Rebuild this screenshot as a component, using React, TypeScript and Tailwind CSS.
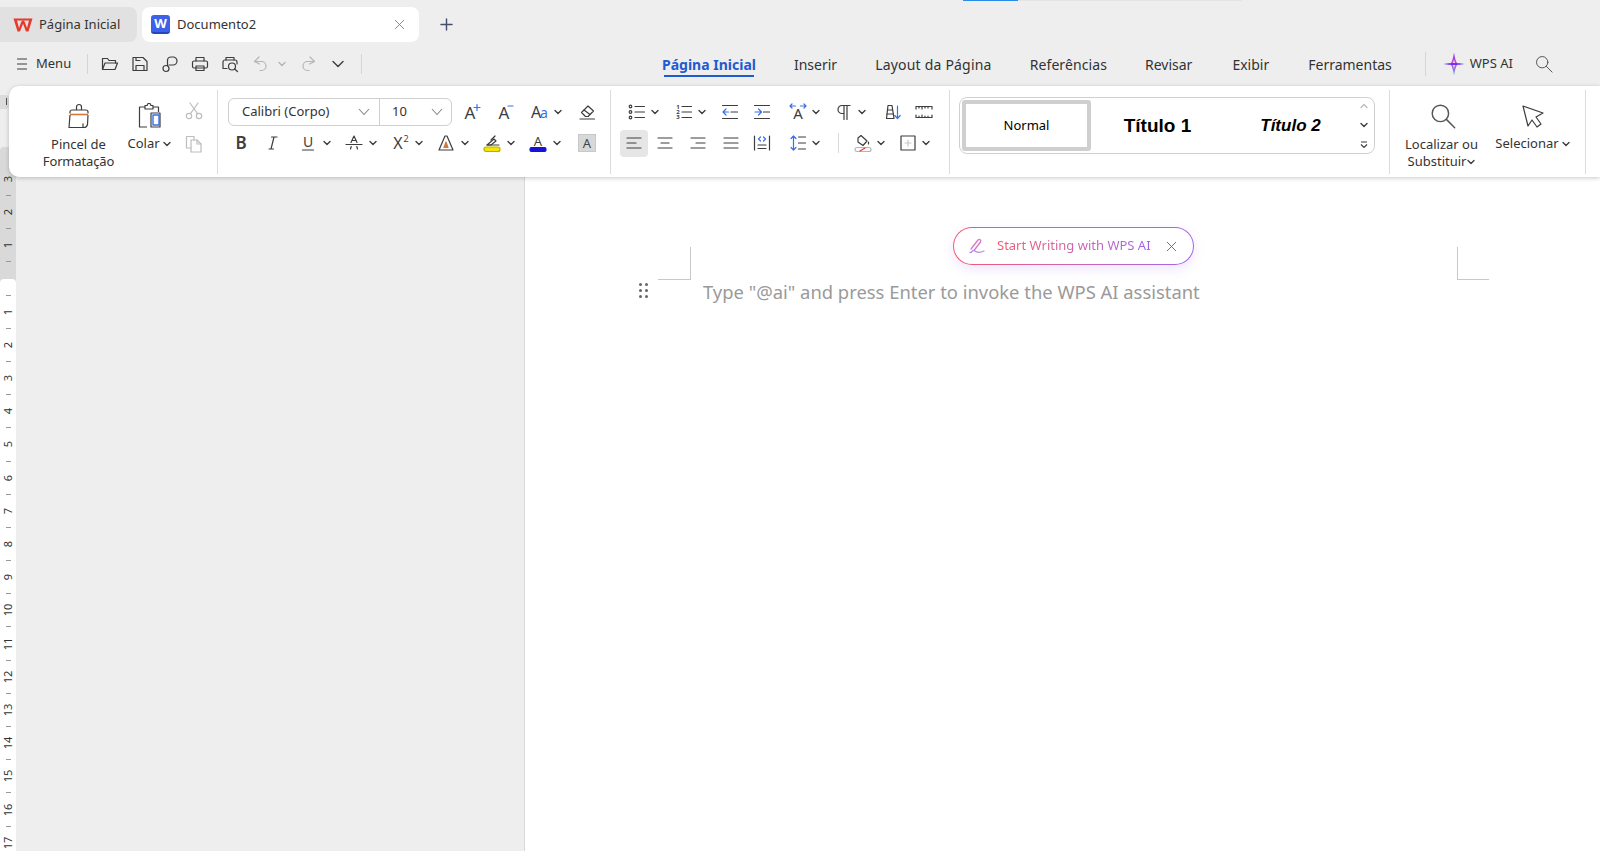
import React from 'react';
import { X, Plus } from 'lucide-react';

const INK = '#3d3d3d';
const BLUE = '#3b6fe6';
const FONT = '[font-family:"Noto_Sans",sans-serif]';

function Ic({ size = 18, children, className }: { size?: number; children: React.ReactNode; className?: string }) {
  return (
    <svg width={size} height={size} viewBox={`0 0 ${size} ${size}`} fill="none" stroke={INK} strokeWidth={1.2} strokeLinecap="round" strokeLinejoin="round" className={`shrink-0 overflow-visible ${className ?? ''}`}>
      {children}
    </svg>
  );
}

function Letter({ ch, x = 9, y = 14, size = 15, weight = 400, italic = false, fill = INK }: { ch: string; x?: number; y?: number; size?: number; weight?: number; italic?: boolean; fill?: string }) {
  return (
    <text x={x} y={y} textAnchor="middle" fontFamily="Noto Sans, sans-serif" fontSize={size} fontWeight={weight} fontStyle={italic ? 'italic' : 'normal'} fill={fill} stroke="none">
      {ch}
    </text>
  );
}

function Chev({ className, color = INK }: { className?: string; color?: string }) {
  return (
    <svg width="8" height="6" viewBox="0 0 8 6" fill="none" stroke={color} strokeWidth={1.4} strokeLinecap="round" strokeLinejoin="round" className={`shrink-0 ${className ?? ''}`}>
      <path d="M1 1.5 4 4.5 7 1.5" />
    </svg>
  );
}

// icon followed by its little dropdown arrow
function Drop({ children, className, wide }: { children: React.ReactNode; className?: string; wide?: boolean }) {
  return (
    <div className={`flex items-center shrink-0 ${className ?? ''}`}>
      {children}
      <Chev className={wide ? 'ml-[6px]' : 'ml-[5px]'} />
    </div>
  );
}

function WpsLogo() {
  return (
    <svg width="20" height="16" viewBox="0 0 20 16" className="shrink-0">
      <path d="M0.5 1.5H19.5L15.5 14.5H13L10 6.8L7 14.5H4.5Z M4 3.6 6 11 8.4 4.4H11.6L14 11 16 3.6Z" fill="#e8392d" fillRule="evenodd" />
      <path d="M8.6 3.6H11.4L10 7.6Z" fill="#e8392d" />
    </svg>
  );
}

function WordLogo() {
  return (
    <div className="w-[19px] h-[19px] rounded-[3px] bg-[#3b62e8] border-b-2 border-[#2746b8] flex items-center justify-center text-white text-[13px] font-bold leading-none shrink-0">
      W
    </div>
  );
}

function StarLogo() {
  return (
    <svg width="22" height="24" viewBox="0 0 22 24" className="shrink-0">
      <defs>
        <linearGradient id="starV" x1="0" y1="0" x2="0" y2="1">
          <stop offset="0" stopColor="#7a2ff0" />
          <stop offset="0.5" stopColor="#d64bd8" />
          <stop offset="1" stopColor="#35a9f5" />
        </linearGradient>
      </defs>
      <path d="M11 0.5C11.8 6 13 9.5 14.5 12 13 14.5 11.8 18 11 23.5 10.2 18 9 14.5 7.5 12 9 9.5 10.2 6 11 0.5Z M11 7.5C10.7 9.2 10.2 10.6 9.6 12 10.2 13.4 10.7 14.8 11 16.5 11.3 14.8 11.8 13.4 12.4 12 11.8 10.6 11.3 9.2 11 7.5Z" fill="url(#starV)" fillRule="evenodd" />
      <path d="M0.5 12C7 10.6 15 10.6 21.5 12 15 13.4 7 13.4 0.5 12Z" fill="#6a2df0" />
    </svg>
  );
}

function Search({ size = 20, color = '#555' }: { size?: number; color?: string }) {
  return (
    <svg width={size} height={size} viewBox="0 0 20 20" fill="none" stroke={color} strokeWidth={1.1} strokeLinecap="round" className="shrink-0">
      <circle cx="8" cy="8" r="6.3" />
      <path d="M12.6 12.6 19 19" />
    </svg>
  );
}

function Lines({ rows }: { rows: [number, number, number][] }) {
  return (
    <Ic>
      {rows.map(([x1, x2, y]) => (
        <path key={y} d={`M${x1} ${y}H${x2}`} />
      ))}
    </Ic>
  );
}

function TitleBar() {
  return (
    <div className="h-[42px] pt-[7px] flex items-stretch relative shrink-0">
      <div className="absolute top-0 left-[963px] w-[55px] h-px bg-[#2b8be8]" />
      <div className="absolute top-0 left-[1018px] w-[224px] h-px bg-[#e4e4e4]" />
      <div className="w-[137px] rounded-r-lg bg-[#e1e1e1] flex items-center pl-[13px] gap-[6px]">
        <WpsLogo />
        <span className="text-[13px] text-[#333]">Página Inicial</span>
      </div>
      <div className="w-[277px] ml-[5px] rounded-lg bg-white flex items-center pl-[9px] pr-[11px]">
        <WordLogo />
        <span className="text-[13px] text-[#333] ml-[7px] flex-1">Documento2</span>
        <X size={17} strokeWidth={1.2} color="#777" />
      </div>
      <Plus size={19} strokeWidth={1.8} color="#44506b" className="self-center ml-[18px]" />
    </div>
  );
}

function QuickBar() {
  const dim = '#b5b5b5';
  return (
    <div className="h-[44px] flex items-center shrink-0 relative">
      <svg width="12" height="14" viewBox="0 0 12 14" stroke={INK} strokeWidth={1.1} className="ml-[16px] shrink-0">
        <path d="M1 2H11M1 7H11M1 12H11" />
      </svg>
      <span className="ml-[8px] text-[13px] text-[#333] w-[36px]">Menu</span>
      <div className="w-px h-[20px] bg-[#d5d5d5] ml-[15px]" />
      <div className="ml-[13px] flex items-center gap-[12px]">
        <Ic><path d="M1.5 14.5V3.5H6.5L8 5.5H14.5V8" /><path d="M1.5 14.5H14L16.5 8H4L1.5 14.5Z" /></Ic>
        <Ic><path d="M2 2.5H12L16 6.5V15.5H2Z" /><path d="M5 15.5V10.5H13V15.5" /><path d="M5 2.5V5.5H9" /></Ic>
        <Ic><path d="M8 10H12A4 4 0 0 0 12 2H10A3.5 3.5 0 0 0 6.5 5.5V11" /><circle cx="5" cy="13.5" r="3" /></Ic>
        <Ic><path d="M5 6V2.5H13V6" /><rect x="1.5" y="6" width="15" height="7" rx="1.5" /><path d="M5 11V15.5H13V11Z" /></Ic>
        <Ic><path d="M5 5V2.5H13V5" /><path d="M6 13.5H2V7A2 2 0 0 1 4 5H14A2 2 0 0 1 16 7V9" /><circle cx="11" cy="11.5" r="3.5" /><path d="M13.6 14 16.5 16.5" /></Ic>
      </div>
      <div className="ml-[13px] flex items-center">
        <Ic><g stroke={dim}><path d="M7 2 2.5 6.5 7.5 9" /><path d="M2.5 6.5H9.5A4.5 4.5 0 0 1 9.5 15.5H8" /></g></Ic>
        <Chev className="ml-[8px]" color={dim} />
        <Ic className="ml-[13px]"><g stroke={dim}><path d="M11 2 15.5 6.5 10.5 9" /><path d="M15.5 6.5H8.5A4.5 4.5 0 0 0 8.5 15.5H10" /></g></Ic>
        <svg width="12" height="8" viewBox="0 0 12 8" fill="none" stroke={INK} strokeWidth={1.4} strokeLinecap="round" strokeLinejoin="round" className="ml-[15px]"><path d="M1 1.5 6 6.5 11 1.5" /></svg>
      </div>
      <div className="w-px h-[20px] bg-[#d5d5d5] ml-[17px]" />
      <nav className="ml-[300px] mt-px flex items-center text-[14px] text-[#333] gap-[38px]">
        <span className="relative font-bold text-[#1f5bd0]">
          Página Inicial
          <span className="absolute left-[2px] right-[2px] -bottom-[2px] h-[2px] bg-[#1f5bd0]" />
        </span>
        <span>Inserir</span>
        <span className="tracking-[0.2px]">Layout da Página</span>
        <span className="tracking-[0.1px]">Referências</span>
        <span>Revisar</span>
        <span className="ml-[2px]">Exibir</span>
        <span className="ml-[1px]">Ferramentas</span>
      </nav>
      <div className="w-px h-[24px] bg-[#d5d5d5] ml-[33px]" />
      <div className="ml-[17px]"><StarLogo /></div>
      <span className="ml-[5px] text-[13px] text-[#333]">WPS AI</span>
      <div className="ml-[22px]"><Search size={18} /></div>
    </div>
  );
}

function Divider() {
  return <div className="w-px h-[84px] bg-[#dcdcdc] self-center shrink-0" />;
}

function ClipboardGroup() {
  return (
    <div className="w-[208px] flex shrink-0">
      <div className="ml-[30px] w-[79px] pt-[16px] flex flex-col items-center">
        <svg width="28" height="28" viewBox="0 0 28 28" fill="none" stroke={INK} strokeWidth={1.2} strokeLinejoin="round">
          <path d="M11.5 8V5A2.5 2.5 0 0 1 16.5 5V8" />
          <path d="M5 11.5V10A2 2 0 0 1 7 8H21A2 2 0 0 1 23 10V11.5" />
          <path d="M5 12.5H23" stroke="#d2783c" strokeWidth={1.6} />
          <path d="M5 13 4 25.5H19C21 25.5 22 24.5 22.5 22.5L23 13" />
          <path d="M18 21.5V25.5" />
        </svg>
        <div className="mt-[6px] text-[13px] leading-[17px] text-[#333] text-center whitespace-nowrap">
          Pincel de<br />
          <span className="tracking-[-0.15px]">Formatação</span>
        </div>
      </div>
      <div className="ml-[11px] w-[40px] pt-[16px] flex flex-col items-center">
        <svg width="28" height="28" viewBox="0 0 28 28" fill="none" stroke={INK} strokeWidth={1.2} strokeLinejoin="round">
          <path d="M10 5H4.5V25H12" />
          <path d="M18 5H23.5V10" />
          <path d="M10 7V3.5H12L13 1.5H15L16 3.5H18V7Z" />
          <rect x="16" y="11" width="9" height="14" fill="#fff" stroke={INK} />
          <rect x="18" y="13" width="6" height="10" stroke={BLUE} strokeWidth={1.4} />
        </svg>
        <div className="mt-[5px] flex items-center text-[13px] leading-[17px] text-[#333] whitespace-nowrap">Colar<Chev className="ml-[3px]" /></div>
      </div>
      <div className="ml-[16px] w-[18px] pt-[16px] flex flex-col items-center">
        <Ic><g stroke="#bdbdbd"><circle cx="4" cy="14" r="2.7" /><circle cx="14" cy="14" r="2.7" /><path d="M5.5 11.7 13 1M12.5 11.7 5 1" /></g></Ic>
        <div className="mt-[15px]">
          <Ic><g stroke="#bdbdbd"><path d="M6 13H1.5V1.5H9V5" /><path d="M6 5H12L16 9V17H6Z" /><path d="M12 5V9H16" /></g></Ic>
        </div>
      </div>
    </div>
  );
}

function FontGroup() {
  return (
    <div className="w-[392px] pt-[12px] flex flex-col shrink-0">
      <div className="h-[28px] flex items-center">
        <div className="ml-[10px] w-[224px] h-[28px] rounded-md border-[1.5px] border-[#cfcfcf] flex items-center text-[13px] text-[#333] shrink-0">
          <span className="pl-[13px] w-[151px] flex items-center justify-between pr-[9px] h-full border-r-[1.5px] border-[#cfcfcf]">
            Calibri (Corpo)
            <svg width="12" height="8" viewBox="0 0 12 8" fill="none" stroke="#888" strokeWidth={1.1}><path d="M1 1 6 6.5 11 1" /></svg>
          </span>
          <span className="pl-[12px] pr-[8px] flex-1 flex items-center justify-between">
            10
            <svg width="12" height="8" viewBox="0 0 12 8" fill="none" stroke="#888" strokeWidth={1.1}><path d="M1 1 6 6.5 11 1" /></svg>
          </span>
        </div>
        <Ic className="ml-[11px]"><Letter ch="A" x={7} y={16} size={17} /><path d="M11 4.5H17M14 1.5V7.5" stroke={BLUE} /></Ic>
        <Ic className="ml-[15px]"><Letter ch="A" x={8} y={16} size={17} /><path d="M12 3H17" stroke={BLUE} /></Ic>
        <Drop className="ml-[16px]" wide><Ic><Letter ch="A" x={6} y={15} size={16} /><Letter ch="a" x={14} y={15} size={14} fill={BLUE} /></Ic></Drop>
        <Ic className="ml-[16px]"><path d="M3.5 9.5 10 3 15.5 8 10 13.5H7.5Z" /><path d="M6 7 12 11.5" /><path d="M2 16H16.5" /></Ic>
      </div>
      <div className="mt-[3px] h-[28px] flex items-center pl-[14px]">
        <Ic><Letter ch="B" weight={600} size={17} y={15} /></Ic>
        <Ic className="ml-[13px]"><path d="M8 15 11 3M6 15H10.5M8.5 3H14" /></Ic>
        <Drop className="ml-[18px]" wide><Ic><Letter ch="U" y={13} size={14} /><path d="M3.5 16H14.5" /></Ic></Drop>
        <Drop className="ml-[14px]" wide><Ic><path d="M6 8.5 9 2 12 8.5M7 6.5H11" /><path d="M1 10.5H17" /><path d="M5.5 15 6.2 12.5M12.5 15 11.8 12.5" /></Ic></Drop>
        <Drop className="ml-[14px]" wide><Ic><Letter ch="X" x={7} y={15} size={16} /><Letter ch="2" x={15} y={8} size={9} /></Ic></Drop>
        <Drop className="ml-[14px]" wide><Ic><path d="M2 16 8 2H10L16 16Z" /><path d="M7 13.5 9 8 11 13.5Z" fill="#d2783c" stroke="#d2783c" /></Ic></Drop>
        <Drop className="ml-[14px]" wide>
          <Ic><path d="M4 11 11 5 13 7 8 11Z" /><path d="M12 2 8 6" /><path d="M4 11H16" /><rect x="1" y="13" width="16" height="4.5" rx="2" fill="#f3e600" stroke="#b9ad00" /></Ic>
        </Drop>
        <Drop className="ml-[14px]" wide>
          <Ic><Letter ch="A" y={12} size={13} /><rect x="1" y="13.5" width="16" height="4" rx="1.5" fill="#1414d8" stroke="#1414d8" /></Ic>
        </Drop>
        <div className="ml-[17px] w-[18px] h-[18px] bg-[#d8d8d8] border border-[#c8c8c8] flex items-center justify-center text-[13px] leading-none text-[#444]">A</div>
      </div>
    </div>
  );
}

function ParagraphGroup() {
  return (
    <div className="w-[338px] pt-[12px] flex flex-col shrink-0">
      <div className="h-[28px] flex items-center pl-[17px]">
        <Drop><Ic><circle cx="2.5" cy="3.5" r="1.3" /><circle cx="2.5" cy="9" r="1.3" /><circle cx="2.5" cy="14.5" r="1.3" /><path d="M7 3.5H16.5M7 9H16.5M7 14.5H16.5" /></Ic></Drop>
        <Drop className="ml-[16px]"><Ic><Letter ch="1" x={3} y={6} size={6} weight={700} /><Letter ch="2" x={3} y={11} size={6} weight={700} /><Letter ch="3" x={3} y={16} size={6} weight={700} /><path d="M7 3.5H16.5M7 9H16.5M7 14.5H16.5" /></Ic></Drop>
        <Ic className="ml-[15px]"><path d="M1.5 2.5H16.5M10 9H16.5M1.5 15.5H16.5" /><path d="M7.5 9H2M5 6 2 9 5 12" stroke={BLUE} /></Ic>
        <Ic className="ml-[14px]"><path d="M1.5 2.5H16.5M10.5 9H16.5M1.5 15.5H16.5" /><path d="M2 9H8M5.5 6 8.5 9 5.5 12" stroke={BLUE} /></Ic>
        <Drop className="ml-[18px]"><Ic><Letter ch="A" y={16} size={15} /><path d="M1 3H6.5M11.5 3H17M3 1 1 3 3 5M15 1 17 3 15 5" stroke={BLUE} /></Ic></Drop>
        <Drop className="ml-[15px]"><Ic><path d="M9 2.5H7A4 4 0 0 0 7 10.5H9V2.5H15M9 2.5V16.5M12 2.5V16.5" /></Ic></Drop>
        <Ic className="ml-[17px]"><path d="M3.5 15.5 5 2.5H9L11 15.5Z" /><path d="M4 11H10.5M5 7H9.5" /><path d="M14.5 3V15.5M11.8 12.5 14.5 15.5 17.2 12.5" stroke={BLUE} /></Ic>
        <Ic className="ml-[14px]"><path d="M1 6V3.5H17V6M1 12V14.5H17V12" /><path d="M4 3.5V5M7 3.5V6M10 3.5V5M13 3.5V5M4 14.5V13M7 14.5V12M10 14.5V13M13 14.5V13" /></Ic>
      </div>
      <div className="mt-[3px] h-[28px] flex items-center pl-[9px]">
        <div className="w-[28px] h-[27px] rounded-[4px] bg-[#e6e6e6] flex items-center justify-center"><Lines rows={[[2, 16, 4], [2, 11, 9], [2, 16, 14]]} /></div>
        <div className="ml-[8px]"><Lines rows={[[2, 16, 4], [5, 13, 9], [2, 16, 14]]} /></div>
        <div className="ml-[15px]"><Lines rows={[[2, 16, 4], [7, 16, 9], [2, 16, 14]]} /></div>
        <div className="ml-[15px]"><Lines rows={[[2, 16, 4], [2, 16, 9], [2, 16, 14]]} /></div>
        <Ic className="ml-[13px]"><path d="M1.5 2V16M16.5 2V16M5 11H13M5 14.5H13" /><path d="M7.5 3 5.5 5 7.5 7M10.5 3 12.5 5 10.5 7" stroke={BLUE} /></Ic>
        <Drop className="ml-[18px]"><Ic><path d="M4.5 2V16M2 4.5 4.5 2 7 4.5M2 13.5 4.5 16 7 13.5" stroke={BLUE} /><path d="M9.5 3H16.5M9.5 9H16.5M9.5 15H16.5" /></Ic></Drop>
        <div className="ml-[18px] w-px h-[20px] bg-[#d8d8d8]" />
        <Drop className="ml-[15px]">
          <Ic><path d="M4 4 7 1.5 13 7 9 11.5 4 8Z" /><path d="M14.5 8V10" /><rect x="1" y="13.5" width="16" height="4" rx="2" stroke="#b5b5b5" /><path d="M6 17 11 14" stroke="#e8392d" /></Ic>
        </Drop>
        <Drop className="ml-[14px]"><Ic><rect x="2" y="2" width="14" height="14" /><path d="M9 6V12M6 9H12" stroke="#c8c8c8" /></Ic></Drop>
      </div>
    </div>
  );
}

function StylesGroup() {
  return (
    <div className="w-[439px] pl-[9px] pt-[11px] shrink-0">
      <div className="w-[416px] h-[57px] rounded-[8px] border-[1.5px] border-[#d0d0d0] flex items-center text-black pl-[2px]">
        <div className="w-[129px] h-[51px] rounded-[3px] border-[4px] border-[#cfcfcf] flex items-center justify-center text-[13px]">Normal</div>
        <div className={`w-[133px] pt-px text-center text-[19px] font-bold [font-family:"Liberation_Sans",sans-serif]`}>Título 1</div>
        <div className={`w-[133px] pt-px text-center text-[17px] font-bold italic [font-family:"Liberation_Sans",sans-serif]`}>Título 2</div>
        <div className="flex flex-col items-center ml-[3px] gap-[13px]">
          <Chev className="rotate-180" color="#bbb" />
          <Chev />
          <svg width="8" height="8" viewBox="0 0 8 8" fill="none" stroke={INK} strokeWidth={1.2}><path d="M1 1H7M1 3.5 4 6.5 7 3.5" /></svg>
        </div>
      </div>
    </div>
  );
}

function EditGroup() {
  return (
    <div className="w-[195px] flex shrink-0 text-[13px] leading-[17px] text-[#333]">
      <div className="w-[100px] pl-[3px] pt-[17px] flex flex-col items-center">
        <div className="h-[27px] ml-[2px]"><Search size={26} /></div>
        <div className="mt-[6px] text-center whitespace-nowrap">
          Localizar ou<br />
          <span className="inline-flex items-center">Substituir<Chev className="ml-[1px]" /></span>
        </div>
      </div>
      <div className="w-[85px] pt-[17px] flex flex-col items-center">
        <svg width="26" height="27" viewBox="0 0 26 27" fill="none" stroke={INK} strokeWidth={1.2} strokeLinejoin="round">
          <path d="M3 3 23 10 16 14 21 21 17 24 12 17 8 23Z" />
        </svg>
        <div className="mt-[5px] flex items-center whitespace-nowrap">Selecionar<Chev className="ml-[3px]" /></div>
      </div>
    </div>
  );
}

function Ribbon() {
  return (
    <div className="relative z-10 ml-[9px] h-[91px] bg-white rounded-l-[10px] shadow-[0_1px_4px_rgba(0,0,0,0.22)] flex shrink-0">
      <ClipboardGroup />
      <Divider />
      <FontGroup />
      <Divider />
      <ParagraphGroup />
      <Divider />
      <StylesGroup />
      <Divider />
      <EditGroup />
      <Divider />
    </div>
  );
}

function RulerUnit({ n, up }: { n: number; up?: boolean }) {
  const num = (
    <div className="h-[14px] -my-[7px] flex items-center justify-center text-[11px] leading-[14px] text-[#333] -rotate-90">{n}</div>
  );
  return (
    <div className="h-[33.2px] flex flex-col items-center justify-between">
      {up ? num : <div className="h-0" />}
      <div className="w-[5px] h-px bg-[#999]" />
      {up ? <div className="h-0" /> : num}
    </div>
  );
}

function Ruler() {
  return (
    <div className="w-[16px] shrink-0 flex flex-col">
      <div className="mt-[9px] w-[9px] h-[14px] pt-[3px] pl-[6px] rounded-r-[4px] bg-[#dcdcdc]">
        <div className="w-px h-[7px] bg-[#555]" />
      </div>
      <div className="mt-[38px] h-[131.5px] rounded-t-[4px] bg-[#d9d9d9] flex flex-col justify-end">
        {[3, 2, 1].map((n) => <RulerUnit key={n} n={n} up />)}
      </div>
      <div className="flex-1 min-h-0 bg-[#d9d9d9]">
        <div className="h-full bg-white rounded-t-[4px] overflow-hidden">
          {Array.from({ length: 17 }, (_, i) => <RulerUnit key={i} n={i + 1} />)}
        </div>
      </div>
    </div>
  );
}

function WritePill() {
  return (
    <div className="absolute left-[428px] top-[141px] w-[241px] h-[38px] rounded-full p-px bg-gradient-to-r from-[#f4566b] to-[#a463e8] shadow-[0_4px_12px_rgba(150,100,240,0.16)]">
      <div className="h-full rounded-full bg-white flex items-center pl-[14px]">
        <svg width="18" height="18" viewBox="0 0 18 18" fill="none" strokeWidth={1.3} strokeLinecap="round" strokeLinejoin="round">
          <path d="M3 12 10 3C11.5 1.5 13.5 3 12.5 5L6 13.5" stroke="#d878c8" />
          <path d="M2 15.5C4 16 4 13 6 13.5 8 15 12 16 16 14" stroke="#b98ae8" />
        </svg>
        <span className="ml-[11px] text-[13px] bg-gradient-to-r from-[#f8556a] to-[#a25fe6] bg-clip-text text-transparent whitespace-nowrap">Start Writing with WPS AI</span>
        <X size={17} strokeWidth={1.3} color="#666" className="ml-[12px]" />
      </div>
    </div>
  );
}

function Page() {
  return (
    <div className="flex-1 bg-white relative">
      <div className="absolute left-[133px] top-[161px] w-[33px] h-[33px] border-r border-b border-[#c8c8c8]" />
      <div className="absolute left-[932px] top-[161px] w-[32px] h-[33px] border-l border-b border-[#c8c8c8]" />
      <WritePill />
      <div className="absolute left-[114px] top-[197px] grid grid-cols-2 gap-[3px]">
        {[0, 1, 2, 3, 4, 5].map((i) => <div key={i} className="w-[3px] h-[3px] rounded-full bg-[#666]" />)}
      </div>
      <div className="pl-[178px] pt-[191px] text-[18.4px] leading-[30px] text-[#9a9a9a] whitespace-nowrap">
        Type "@ai" and press Enter to invoke the WPS AI assistant
      </div>
    </div>
  );
}

export default function App() {
  return (
    <div className={`w-[1600px] h-[851px] overflow-hidden bg-[#eeeeee] flex flex-col ${FONT}`}>
      <TitleBar />
      <QuickBar />
      <Ribbon />
      <div className="flex-1 -mt-[91px] flex min-h-0">
        <Ruler />
        <div className="w-[509px] shrink-0 border-r border-[#d8d8d8]" />
        <Page />
      </div>
    </div>
  );
}
